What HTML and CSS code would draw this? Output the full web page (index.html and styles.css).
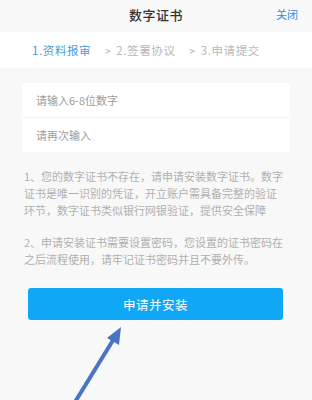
FILE: index.html
```html
<!DOCTYPE html>
<html lang="zh-CN">
<head>
<meta charset="utf-8">
<link rel="stylesheet" href="styles.css">
</head>
<body>
<div class="page">
  <header class="topbar">
    <span></span>
    <h1 class="title">数字证书</h1>
    <a class="close">关闭</a>
  </header>
  <nav class="steps">
    <span class="step active">1.资料报审</span>
    <span class="sep">&gt;</span>
    <span class="step">2.签署协议</span>
    <span class="sep">&gt;</span>
    <span class="step">3.申请提交</span>
  </nav>
  <div class="card">
    <div class="row">请输入6-8位数字</div>
    <div class="row">请再次输入</div>
  </div>
  <div class="desc">
    <p>1、您的数字证书不存在，请申请安装数字证书。数字证书是唯一识别的凭证，开立账户需具备完整的验证环节，数字证书类似银行网银验证，提供安全保障</p>
    <p>2、申请安装证书需要设置密码，您设置的证书密码在之后流程使用，请牢记证书密码并且不要外传。</p>
  </div>
  <button class="btn">申请并安装</button>
  <svg class="arrow" width="312" height="400" viewBox="0 0 312 400">
    <line x1="75" y1="402" x2="115" y2="337" stroke="#4a73c6" stroke-width="4"/>
    <polygon points="121,327 107,338 119,345" fill="#4a73c6"/>
  </svg>
</div>
</body>
</html>
```

FILE: styles.css
```css
* { box-sizing: border-box; }
html, body { margin: 0; padding: 0; }
body {
  background: #f8f8f8;
  font-family: "Noto Sans CJK SC", "Noto Sans", sans-serif;
  width: 312px;
  height: 400px;
  overflow: hidden;
}
.page { position: relative; height: 400px; }
.topbar {
  height: 32px;
  display: grid;
  grid-template-columns: 1fr auto 1fr;
  align-items: center;
  padding: 0 14px 4px;
}
.title {
  margin: 0;
  font-size: 13px;
  font-weight: 500;
  color: #333;
  letter-spacing: 0.5px;
}
.close {
  justify-self: end;
  font-size: 11px;
  color: #2f8fe0;
}
.steps {
  height: 36px;
  background: #fff;
  display: flex;
  align-items: center;
  padding-left: 32px;
  font-size: 11.5px;
  color: #b8b8b8;
  letter-spacing: 0.6px;
}
.step.active { color: #4c9ad9; }
.sep {
  font-size: 10px;
  margin: 0 5px 0 14px;
  color: #a8a8a8;
}
.card {
  margin: 15px 22px 0;
  background: #fff;
}
.row {
  height: 34px;
  display: flex;
  align-items: center;
  padding-left: 14px;
  font-size: 11px;
  color: #9c9c9c;
}
.row + .row { border-top: 1px solid #f3f3f3; height: 35px; }
.desc {
  padding: 16px 26px 0 24px;
  font-size: 11px;
  line-height: 17px;
  color: #b0b0b0;
}
.desc p { margin: 0; }
.desc p + p { margin-top: 15px; }
.btn {
  display: block;
  margin: 20px 29px 0 28px;
  width: 255px;
  height: 32px;
  border: none;
  border-radius: 3px;
  background: #10a8f6;
  color: #fff;
  font-family: inherit;
  font-size: 12.5px;
  letter-spacing: 0.5px;
}
.arrow { position: absolute; left: 0; top: 0; pointer-events: none; }
```
